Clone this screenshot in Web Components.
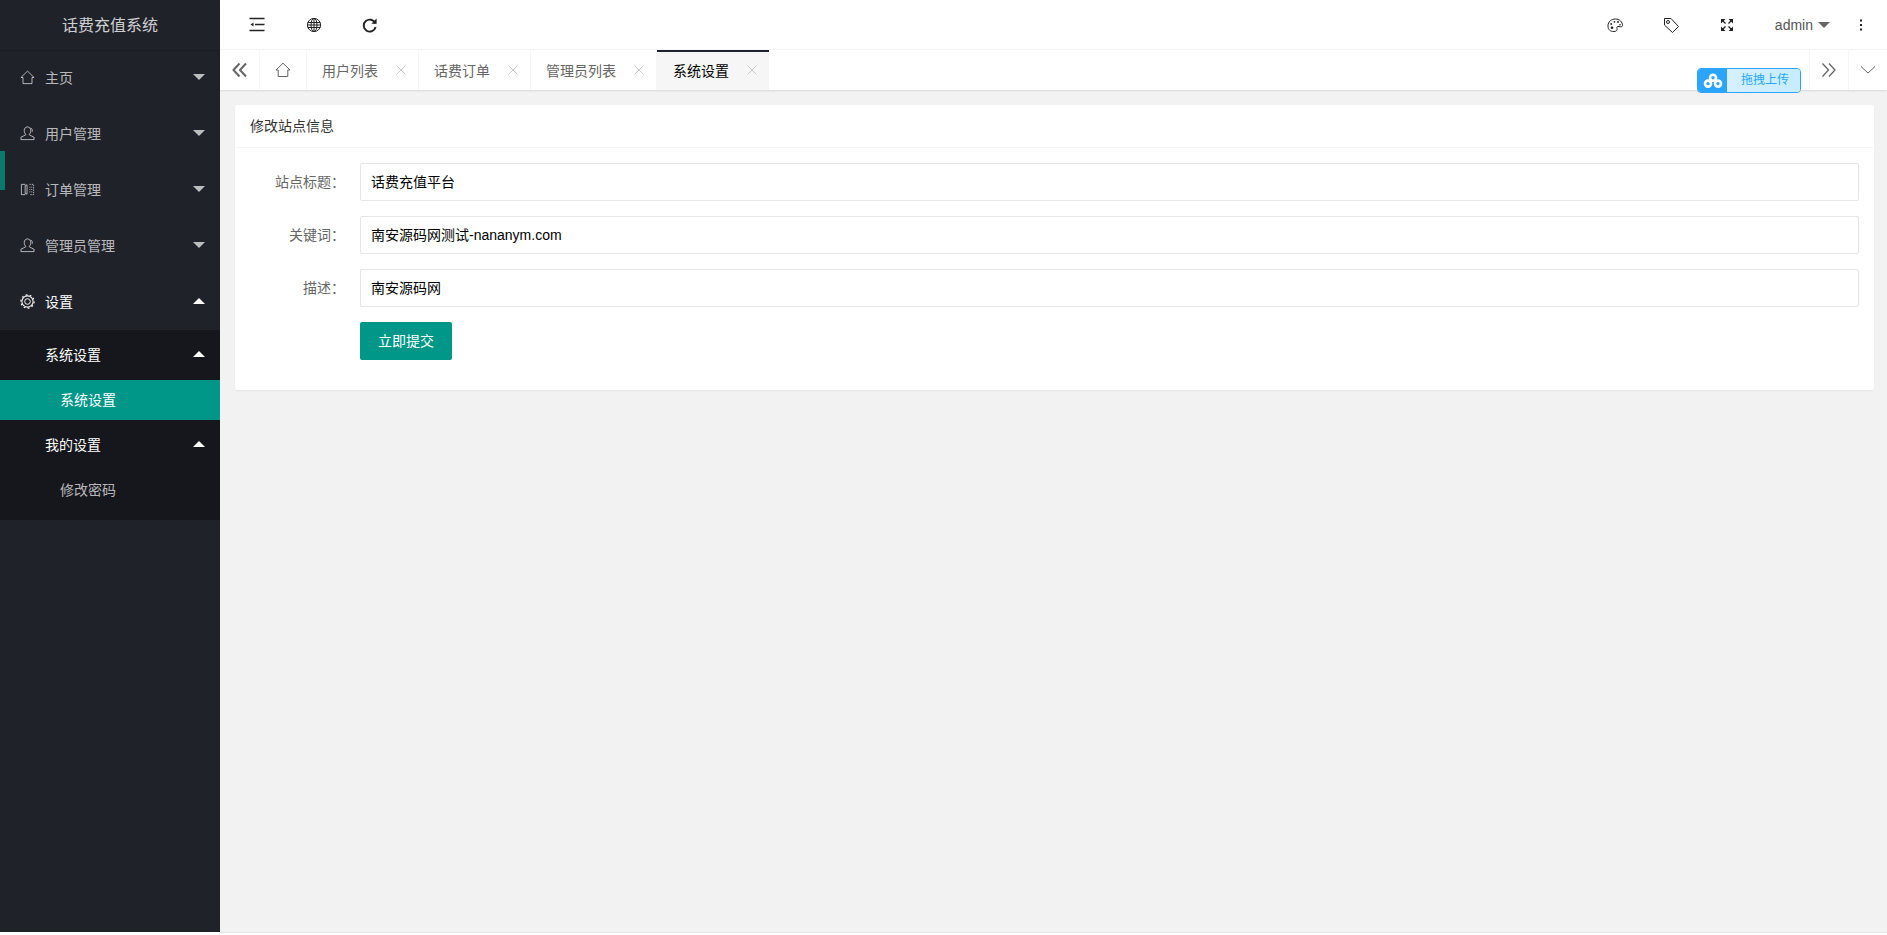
<!DOCTYPE html>
<html lang="zh-CN">
<head>
<meta charset="utf-8">
<title>话费充值系统</title>
<style>
  html, body {
    margin: 0;
    background: #fff;
    font: 14px "Liberation Sans", "Noto Sans CJK SC", sans-serif;
    color: #333;
  }
</style>
</head>
<body>
<admin-app>
  <side-nav slot="side" title-text="话费充值系统">
    <nav-item icon="home" arrow="down">主页</nav-item>
    <nav-item icon="user" arrow="down">用户管理</nav-item>
    <nav-item icon="order" arrow="down">订单管理</nav-item>
    <nav-item icon="user" arrow="down">管理员管理</nav-item>
    <nav-item icon="gear" arrow="up" bright>设置</nav-item>
    <nav-group>
      <nav-item level="1" arrow="up" bright>系统设置</nav-item>
      <nav-item level="2" active bright>系统设置</nav-item>
      <nav-item level="1" arrow="up" bright>我的设置</nav-item>
      <nav-item level="2">修改密码</nav-item>
    </nav-group>
  </side-nav>

  <top-bar slot="top">
    <tool-btn slot="left" icon="shrink"></tool-btn>
    <tool-btn slot="left" icon="globe"></tool-btn>
    <tool-btn slot="left" icon="refresh"></tool-btn>
    <tool-btn slot="right" icon="palette" fixed></tool-btn>
    <tool-btn slot="right" icon="tag" fixed></tool-btn>
    <tool-btn slot="right" icon="expand" fixed></tool-btn>
    <user-menu slot="right">admin</user-menu>
    <tool-btn slot="right" icon="dots" narrow></tool-btn>
  </top-bar>

  <tab-bar slot="top">
    <tab-item>用户列表</tab-item>
    <tab-item>话费订单</tab-item>
    <tab-item>管理员列表</tab-item>
    <tab-item active>系统设置</tab-item>
  </tab-bar>

  <form-card heading="修改站点信息">
    <form-field label="站点标题：">话费充值平台</form-field>
    <form-field label="关键词：">南安源码网测试-nananym.com</form-field>
    <form-field label="描述：">南安源码网</form-field>
    <submit-btn>立即提交</submit-btn>
  </form-card>
</admin-app>

<script>
const ICONS = {
  home: `<path d="M8 1.2 15 8H12.8V14.5H3.2V8H1Z"/>`,
  user: `<path d="M4.5 5C4.5 2.5 6 1 8 1S11.5 2.5 11.5 5C11.5 6.8 10.8 8 10 8.7V9.5L15 12V14.5H1V12L6 9.5V8.7C5.2 8 4.5 6.8 4.5 5Z"/><path d="M11.5 2C13 2.8 13.4 4.5 13 6.2"/>`,
  order: `<path d="M5.5 2.5H1.5V13.5H5.5"/><path d="M5.5 3.5C6.5 3.5 7.5 3 7.5 3V13C7.5 13 6.5 12.5 5.5 12.5Z"/><path d="M10 2.5H14.5V13.5H10" stroke-dasharray="1.5 1"/><path d="M10 5.5H13M10 8H13M10 10.5H13" stroke-dasharray="1 1"/>`,
  gear: `<circle cx="8" cy="8" r="6" stroke-width="1.1"/><circle cx="8" cy="8" r="7.1" stroke-width="1.2" stroke-dasharray="2 2.45"/><circle cx="8" cy="8" r="3"/>`,
  shrink: `<path d="M.5 1.5H15.5M6 7.5H15.5M.5 13.5H15.5" stroke-width="1.4"/><path d="M1.5 7.5 4.5 5.5V9.5Z" fill="currentColor" stroke="none"/>`,
  globe: `<circle cx="8" cy="8" r="6.6"/><ellipse cx="8" cy="8" rx="3" ry="6.6"/><path d="M8 1.4V14.6M1.8 5.5H14.2M1.8 10.5H14.2M1.4 8H14.6"/>`,
  refresh: `<path d="M13.3 6.3A6 6 0 1 0 13.6 10" stroke-width="1.9"/><path d="M9.3 6.8H14.6V1.4Z" fill="currentColor" stroke="none"/>`,
  palette: `<path d="M1 9C1 4.5 4.5 2 8.5 2S15.5 5 15.5 8.5C15.5 10 13.5 10 12 9.5S9.5 10 10 11.5 9.5 14.5 7 14.5C3.5 14.5 1 13 1 9Z"/><circle cx="5" cy="10.8" r="1.3" fill="currentColor" stroke="none"/><circle cx="4.2" cy="7" r=".9" fill="currentColor" stroke="none"/><circle cx="7.4" cy="4.8" r=".9" fill="currentColor" stroke="none"/><circle cx="11" cy="5" r=".9" fill="currentColor" stroke="none"/><circle cx="13" cy="7.7" r=".8" fill="currentColor" stroke="none"/>`,
  tag: `<path d="M1.5 1.5H8L15.5 9.5 9.5 15.5 1.5 8Z"/><circle cx="5" cy="5" r="1.5"/>`,
  expand: `<path d="M2.5 2.5 6.5 6.5M13.5 2.5 9.5 6.5M2.5 13.5 6.5 9.5M13.5 13.5 9.5 9.5" stroke-width="1.3"/><path d="M2 2H6.5L2 6.5ZM14 2H9.5L14 6.5ZM2 14H6.5L2 9.5ZM14 14H9.5L14 9.5Z" fill="currentColor" stroke="none"/>`,
  dots: `<path d="M8 2.5V4.5M8 7V9M8 11.5V13.5" stroke-width="2"/>`,
  rewind: `<path d="M7.5 1.5 1.5 8 7.5 14.5M14 1.5 8 8 14 14.5" stroke-width="2"/>`,
  forward: `<path d="M1.5 1.5 7.5 8 1.5 14.5M8 1.5 14 8 8 14.5" stroke-width="1.3"/>`,
  chevron: `<path d="M1 4.5 8 11 15 4.5"/>`,
  close: `<path d="M3 3 13 13M13 3 3 13"/>`,
  cloud: `<circle cx="10" cy="4.8" r="3" stroke-width="2.6"/><circle cx="5" cy="10.6" r="3" stroke-width="2.6"/><circle cx="15" cy="10.6" r="3" stroke-width="2.6"/>`
};

class ShadowElement extends HTMLElement {
  constructor() {
    super();
    this.attachShadow({mode: 'open'});
  }

  connectedCallback() {
    this.shadowRoot.innerHTML = this.render();
  }
}

class AppIcon extends ShadowElement {
  render() {
    const name = this.getAttribute('name');
    const view = name === 'cloud' ? '0 0 20 16' : '0 0 16 16';
    return `
      <style>
        :host { display: inline-flex; width: var(--icon-size, 16px); height: var(--icon-size, 16px); }
        svg { width: 100%; height: 100%; fill: none; stroke: currentColor; stroke-width: 1; display: block; }
      </style>
      <svg viewBox="${view}">${ICONS[name]}</svg>
    `;
  }
}

class AdminApp extends ShadowElement {
  render() {
    return `
      <style>
        :host {
          display: grid;
          grid-template-columns: 220px 1fr;
          height: 933px;
          overflow: hidden;
          position: relative;
        }
        .side { display: block; height: 932px; }
        main {
          display: flex;
          flex-direction: column;
          background: #f2f2f2;
          border-bottom: 1px solid #e6e6e6;
          min-width: 0;
        }
        .page { padding: 15px 13px 0 15px; }
      </style>
      <div class="side"><slot name="side"></slot></div>
      <main>
        <slot name="top"></slot>
        <div class="page"><slot></slot></div>
      </main>
    `;
  }
}

class SideNav extends ShadowElement {
  render() {
    return `
      <style>
        :host {
          display: block;
          position: relative;
          height: 932px;
          background: #20222a;
        }
        header {
          height: 50px;
          line-height: 51px;
          text-align: center;
          font-size: 16px;
          color: rgba(255, 255, 255, .8);
          box-shadow: 0 1px 1px rgba(0, 0, 0, .1);
        }
        /* sliding marker of the nav, stuck half way like in the original */
        .marker {
          position: absolute;
          left: 0;
          top: 151px;
          width: 5px;
          height: 39px;
          background: #0a7a6c;
        }
      </style>
      <header>${this.getAttribute('title-text')}</header>
      <slot></slot>
      <div class="marker"></div>
    `;
  }
}

class NavGroup extends ShadowElement {
  render() {
    return `
      <style>
        :host { display: block; background: #16171d; padding-bottom: 10px; }
      </style>
      <slot></slot>
    `;
  }
}

class NavItem extends ShadowElement {
  render() {
    const icon = this.getAttribute('icon');
    const arrow = this.getAttribute('arrow');
    return `
      <style>
        :host {
          display: flex;
          align-items: center;
          box-sizing: border-box;
          height: 56px;
          padding: 0 15px 2px 20px;
          color: rgba(255, 255, 255, .7);
          --icon-size: 15px;
        }
        :host([bright]) { color: #fff; }
        :host([level="1"]) { height: 50px; padding-left: 45px; }
        :host([level="2"]) { height: 40px; padding-left: 60px; }
        :host([active]) { background: #009688; }
        app-icon { margin-right: 10px; }
        .text { flex: 1; }
        .arrow { width: 0; height: 0; border: 6px solid transparent; }
        .arrow.down { border-top-color: currentColor; border-bottom-width: 0; }
        .arrow.up { border-bottom-color: currentColor; border-top-width: 0; }
      </style>
      ${icon ? `<app-icon name="${icon}"></app-icon>` : ''}
      <span class="text"><slot></slot></span>
      ${arrow ? `<span class="arrow ${arrow}"></span>` : ''}
    `;
  }
}

class TopBar extends ShadowElement {
  render() {
    return `
      <style>
        :host {
          display: flex;
          justify-content: space-between;
          height: 49px;
          padding: 0 11px 0 9px;
          background: #fff;
          border-bottom: 1px solid #f6f6f6;
        }
        div { display: flex; }
      </style>
      <div><slot name="left"></slot></div>
      <div><slot name="right"></slot></div>
    `;
  }
}

class ToolBtn extends ShadowElement {
  render() {
    return `
      <style>
        :host {
          display: flex;
          align-items: center;
          justify-content: center;
          width: 56.4px;
          color: #222;
        }
        :host([fixed]) { width: 56px; }
        :host([narrow]) { width: 30px; }
      </style>
      <app-icon name="${this.getAttribute('icon')}"></app-icon>
    `;
  }
}

class UserMenu extends ShadowElement {
  render() {
    return `
      <style>
        :host {
          display: flex;
          align-items: center;
          gap: 5px;
          padding: 0 16px 0 20px;
          color: #555;
        }
        i { width: 0; height: 0; border: 6px solid transparent; border-top-color: #666; border-bottom-width: 0; }
      </style>
      <slot></slot><i></i>
    `;
  }
}

class TabBar extends ShadowElement {
  render() {
    return `
      <style>
        :host {
          display: flex;
          height: 40px;
          position: relative;
          background: #fff;
          box-shadow: 0 1px 2px rgba(0, 0, 0, .1);
          color: #666;
          --icon-size: 16px;
        }
        .btn {
          display: flex;
          align-items: center;
          justify-content: center;
          box-sizing: border-box;
          border-right: 1px solid #f6f6f6;
        }
        .rewind { width: 40px; }
        .home { width: 47px; }
        .tabs { flex: 1; display: flex; min-width: 0; }
        .forward { width: 40px; border-left: 1px solid #f6f6f6; }
        .more { width: 38px; border-right: 0; }
        upload-badge { position: absolute; left: 1477px; top: 18px; }
      </style>
      <div class="btn rewind"><app-icon name="rewind"></app-icon></div>
      <div class="btn home"><app-icon name="home"></app-icon></div>
      <div class="tabs"><slot></slot></div>
      <div class="btn forward"><app-icon name="forward"></app-icon></div>
      <div class="btn more"><app-icon name="chevron"></app-icon></div>
      <upload-badge>拖拽上传</upload-badge>
    `;
  }
}

class TabItem extends ShadowElement {
  render() {
    return `
      <style>
        :host {
          display: flex;
          align-items: center;
          gap: 16px;
          box-sizing: border-box;
          height: 40px;
          padding: 0 10px 0 15px;
          border-right: 1px solid #f6f6f6;
          color: #666;
          --icon-size: 14px;
        }
        :host([active]) {
          padding-left: 16px;
          padding-right: 10px;
          background: #f6f6f6;
          color: #000;
          border-right: 0;
          box-shadow: inset 0 2px 0 #1e222a;
        }
        app-icon { color: #c2c2c2; }
      </style>
      <slot></slot>
      <app-icon name="close"></app-icon>
    `;
  }
}

class UploadBadge extends ShadowElement {
  render() {
    return `
      <style>
        :host {
          display: flex;
          box-sizing: border-box;
          width: 104px;
          height: 25px;
          border: 1px solid #2ba5fb;
          border-radius: 4px;
          overflow: hidden;
          font-size: 12px;
          color: #26a8f8;
        }
        .logo {
          display: flex;
          align-items: center;
          justify-content: center;
          width: 29px;
          background: #2ba5fb;
          color: #fff;
          --icon-size: 20px;
        }
        .label {
          flex: 1;
          box-sizing: border-box;
          padding-left: 3px;
          text-align: center;
          line-height: 23px;
          background: linear-gradient(to right, #d6f0ff, #c7ecff);
        }
      </style>
      <div class="logo"><app-icon name="cloud"></app-icon></div>
      <div class="label"><slot></slot></div>
    `;
  }
}

class FormCard extends ShadowElement {
  render() {
    return `
      <style>
        :host {
          display: block;
          background: #fff;
          border-radius: 2px;
          box-shadow: 0 1px 2px rgba(0, 0, 0, .05);
        }
        header {
          height: 42px;
          line-height: 42px;
          padding: 0 15px;
          border-bottom: 1px solid #f6f6f6;
          color: #333;
        }
        .body {
          display: flex;
          flex-direction: column;
          gap: 15px;
          padding: 15px 15px 30px;
        }
      </style>
      <header>${this.getAttribute('heading')}</header>
      <div class="body"><slot></slot></div>
    `;
  }
}

class FormField extends ShadowElement {
  render() {
    return `
      <style>
        :host { display: flex; height: 38px; }
        label {
          box-sizing: border-box;
          width: 110px;
          padding-right: 15px;
          line-height: 38px;
          text-align: right;
          color: #666;
        }
        .input {
          flex: 1;
          box-sizing: border-box;
          border: 1px solid #e6e6e6;
          border-radius: 2px;
          padding-left: 10px;
          line-height: 36px;
          color: #000;
        }
      </style>
      <label>${this.getAttribute('label')}</label>
      <div class="input"><slot></slot></div>
    `;
  }
}

class SubmitBtn extends ShadowElement {
  render() {
    return `
      <style>
        :host {
          display: block;
          align-self: flex-start;
          margin-left: 110px;
          width: 92px;
          height: 38px;
          line-height: 38px;
          text-align: center;
          background: #009688;
          color: #fff;
          border-radius: 2px;
        }
      </style>
      <slot></slot>
    `;
  }
}

customElements.define('app-icon', AppIcon);
customElements.define('admin-app', AdminApp);
customElements.define('side-nav', SideNav);
customElements.define('nav-group', NavGroup);
customElements.define('nav-item', NavItem);
customElements.define('top-bar', TopBar);
customElements.define('tool-btn', ToolBtn);
customElements.define('user-menu', UserMenu);
customElements.define('tab-bar', TabBar);
customElements.define('tab-item', TabItem);
customElements.define('upload-badge', UploadBadge);
customElements.define('form-card', FormCard);
customElements.define('form-field', FormField);
customElements.define('submit-btn', SubmitBtn);
</script>
</body>
</html>
